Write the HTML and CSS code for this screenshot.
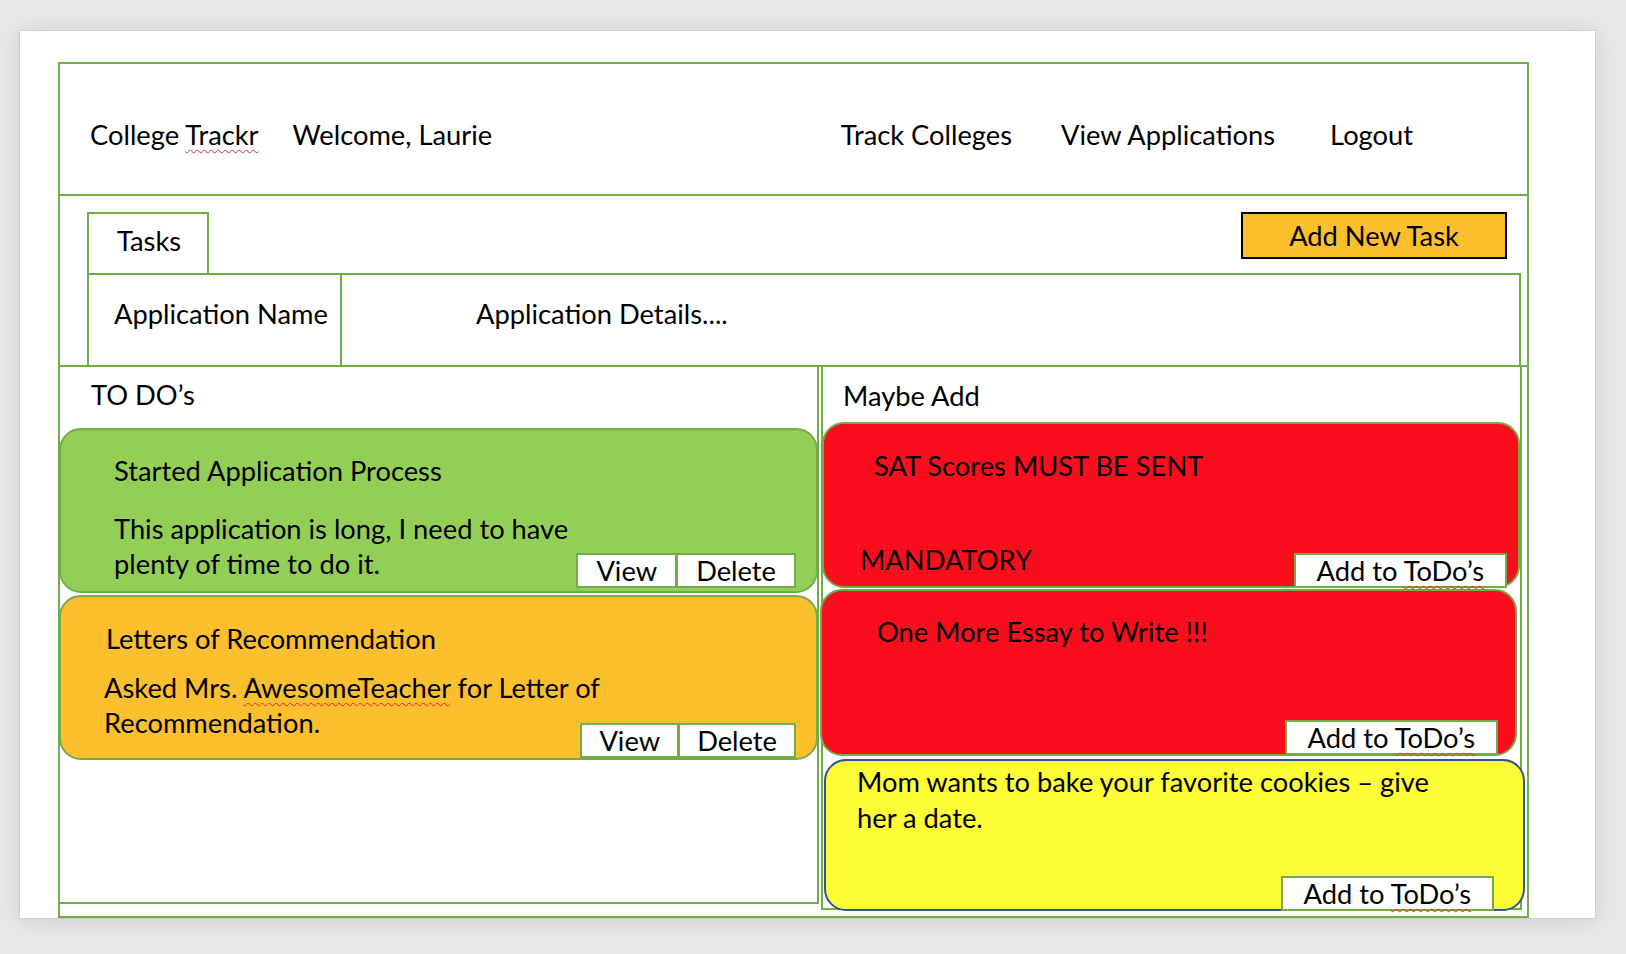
FILE: index.html
```html
<!DOCTYPE html>
<html lang="en">
<head>
<meta charset="utf-8">
<title>College Trackr</title>
<link rel="stylesheet" href="styles.css">
</head>
<body>
<div class="page">
  <div class="frame">
    <header class="topbar">
      <span class="brand">College <span class="spell">Trackr</span></span>
      <span class="welcome">Welcome, Laurie</span>
      <nav class="nav">
        <a class="nav-link">Track Colleges</a>
        <a class="nav-link">View Applications</a>
        <a class="nav-link">Logout</a>
      </nav>
    </header>
    <section class="tasks">
      <div class="tasks-top">
        <div class="tab">Tasks</div>
        <button class="add-task">Add New Task</button>
      </div>
      <div class="app-row">
        <div class="app-name">Application Name</div>
        <div class="app-details">Application Details....</div>
      </div>
      <div class="panels">
        <div class="panel panel-todo">
          <div class="panel-label">TO DO’s</div>
          <div class="card card-green">
            <div class="card-title">Started Application Process</div>
            <div class="card-foot">
              <p class="card-text">This application is long, I need to have<br>plenty of time to do it.</p>
              <div class="btn-group"><button class="btn">View</button><button class="btn">Delete</button></div>
            </div>
          </div>
          <div class="card card-orange">
            <div class="card-title">Letters of Recommendation</div>
            <div class="card-foot">
              <p class="card-text">Asked Mrs. <span class="spell">AwesomeTeacher</span> for Letter of<br>Recommendation.</p>
              <div class="btn-group"><button class="btn">View</button><button class="btn">Delete</button></div>
            </div>
          </div>
        </div>
        <div class="panel panel-maybe">
          <div class="panel-label">Maybe Add</div>
          <div class="card card-red card-sat">
            <div class="card-title">SAT Scores MUST BE SENT</div>
            <div class="card-foot">
              <p class="card-text">MANDATORY</p>
              <button class="btn btn-add">Add to <span class="spell">ToDo’s</span></button>
            </div>
          </div>
          <div class="card card-red card-essay">
            <div class="card-title">One More Essay to Write !!!</div>
            <div class="card-foot">
              <button class="btn btn-add">Add to <span class="spell">ToDo’s</span></button>
            </div>
          </div>
          <div class="card card-yellow">
            <div class="card-title">Mom wants to bake your favorite cookies – give<br>her a date.</div>
            <div class="card-foot">
              <button class="btn btn-add">Add to <span class="spell">ToDo’s</span></button>
            </div>
          </div>
        </div>
      </div>
    </section>
  </div>
</div>
</body>
</html>
```
FILE: styles.css
```css
* {
  box-sizing: border-box;
}

html,
body {
  margin: 0;
}

body {
  width: 1626px;
  height: 954px;
  overflow: hidden;
  background: #e8e8e8;
  font-family: Lato, "Open Sans", "Liberation Sans", sans-serif;
  font-size: 27.3px;
  line-height: 36px;
  color: #000;
}

.page {
  margin: 31px 0 0 20px;
  width: 1575px;
  height: 887px;
  padding: 31px 0 0 38px;
  background: #fff;
  box-shadow: 0 0 0 1px rgba(0, 0, 0, 0.05), 0 2px 22px rgba(0, 0, 0, 0.12);
}

.frame {
  width: 1471px;
  height: 856px;
  border: 2px solid #70ad47;
  display: flex;
  flex-direction: column;
}

/* header */
.topbar {
  flex: none;
  height: 132px;
  display: flex;
  align-items: flex-start;
  padding: 53px 114px 0 30px;
  border-bottom: 2px solid #70ad47;
  white-space: nowrap;
}

.brand {
  margin-right: 34px;
}

.nav {
  margin-left: auto;
  display: flex;
  gap: 49px;
}

.nav-link:last-child {
  margin-left: 6px;
}

.spell {
  text-decoration: underline wavy #e3262b;
  text-decoration-thickness: 1px;
  text-decoration-skip-ink: none;
  text-underline-offset: 4px;
}

/* tasks area */
.tasks {
  flex: 1;
  display: flex;
  flex-direction: column;
}

.tasks-top {
  display: flex;
  align-items: flex-start;
  padding: 16px 20px 0 27px;
}

.tab {
  width: 122px;
  height: 61px;
  padding: 9px 0 0 28px;
  border: 2px solid #70ad47;
  border-bottom: none;
}

.add-task {
  margin-left: auto;
  width: 266px;
  height: 47px;
  padding: 0;
  border: 2px solid #000;
  background: #fcbf2e;
  font: inherit;
  line-height: 36px;
  color: #000;
}

.app-row {
  display: flex;
  height: 92px;
  margin: 0 6px 0 27px;
  border: 2px solid #70ad47;
  border-bottom: none;
}

.app-name {
  width: 253px;
  padding: 21px 0 0 25px;
  border-right: 2px solid #70ad47;
}

.app-details {
  padding: 21px 0 0 134px;
}

/* panels */
.panels {
  display: flex;
  align-items: flex-start;
  gap: 2px;
  border-top: 2px solid #70ad47;
}

.panel {
  flex: none;
  display: flex;
  flex-direction: column;
}

.panel-todo {
  width: 759px;
  height: 537px;
  border-right: 2px solid #70ad47;
  border-bottom: 2px solid #70ad47;
}

.panel-maybe {
  width: 701px;
  height: 543px;
  border: 2px solid #70ad47;
  border-top: none;
}

.panel-todo .panel-label {
  margin: 10px 0 15px 31px;
}

.panel-maybe .panel-label {
  margin: 11px 0 8px 20px;
}

/* cards */
.card {
  flex: none;
  display: flex;
  flex-direction: column;
  border: 2px solid #70ad47;
  border-radius: 22px;
  white-space: nowrap;
}

.card-foot {
  margin-top: auto;
  display: flex;
  align-items: flex-end;
  justify-content: space-between;
}

.card-text {
  flex: 0 1 auto;
  min-width: 0;
  margin: 0;
  line-height: 35px;
}

.btn-group {
  flex: none;
  display: flex;
}

.btn {
  flex: none;
  height: 35px;
  padding: 0 18px;
  border: 2px solid #70ad47;
  background: #fff;
  font: inherit;
  line-height: 31px;
  color: #000;
  white-space: nowrap;
}

.btn-group .btn + .btn {
  margin-left: -1px;
}

.card-green {
  margin-left: -1px;
  width: 759px;
  height: 165px;
  padding: 23px 20px 3px 53px;
  background: #93cf57;
}

.card-green .card-text {
  margin-bottom: 7px;
}

.card-orange {
  margin: 2px 0 0 -1px;
  width: 759px;
  height: 165px;
  padding: 24px 20px 0 45px;
  background: #fcbf2e;
}

.card-orange .card-text {
  margin: 0 0 18px -2px;
}

.card-orange .btn {
  padding: 0 17px;
}

.card-red {
  background: #fc0d1e;
}

.card-sat {
  margin-left: -1px;
  width: 698px;
  height: 166px;
  padding: 24px 11px 0 0;
}

.card-sat .card-title {
  padding-left: 50px;
}

.card-sat .card-text {
  margin: 0 0 9px 36px;
}

.card-sat .btn-add {
  margin-bottom: -2px;
}

.card-essay {
  margin: 1px 0 0 -3px;
  width: 697px;
  height: 167px;
  padding: 23px 17px 0 0;
}

.card-essay .card-title {
  padding-left: 55px;
}

.card-essay .card-foot {
  justify-content: flex-end;
}

.card-essay .btn-add {
  margin-bottom: -1px;
}

.card-yellow {
  margin: 3px 0 0 1px;
  width: 701px;
  height: 152px;
  padding: 3px 29px 0 31px;
  background: #fffc38;
  border-color: #2f5496;
}

.card-yellow .card-foot {
  justify-content: flex-end;
}

.card-yellow .btn-add {
  margin-bottom: -2px;
}

.btn-add {
  padding: 0 21px;
}
```
